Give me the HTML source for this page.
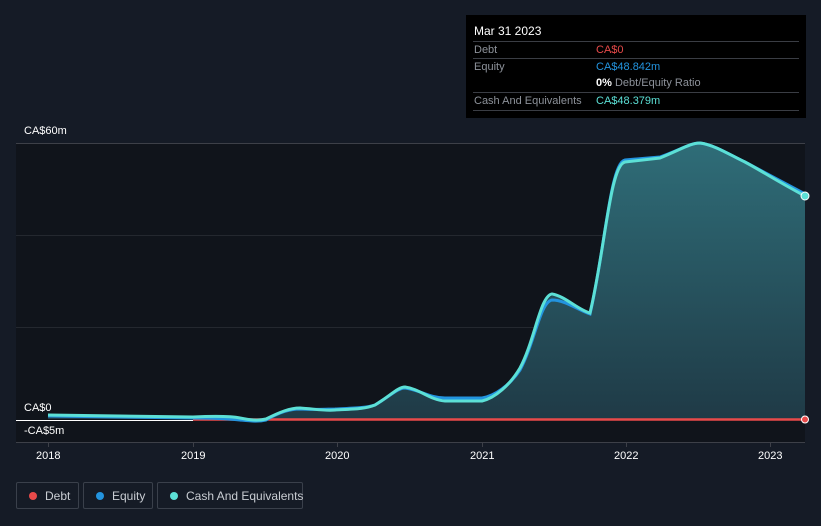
<!DOCTYPE html>
<html><head><meta charset="utf-8"><style>
html,body{margin:0;padding:0;}
body{width:821px;height:526px;background:#151b26;font-family:"Liberation Sans",sans-serif;position:relative;overflow:hidden;color:#fff;}
.tip{position:absolute;left:466px;top:15px;width:340px;height:103px;background:#000;font-size:11px;}
.tip .h{position:absolute;left:8px;top:9px;font-size:12px;color:#fff;}
.row{position:absolute;left:7px;width:326px;border-top:1px solid #3a3d44;height:17px;}
.row span{position:absolute;top:2px;white-space:nowrap;}
.l{left:1px;color:#8d929a;}
.v{left:123px;}
.lab{position:absolute;font-size:11px;color:#fff;}
.leg{position:absolute;top:482px;height:27px;border:1px solid #3a404b;border-radius:2px;font-size:12px;color:#c9cdd3;box-sizing:border-box;white-space:nowrap;}
.leg i{position:absolute;left:12px;top:9px;width:8px;height:8px;border-radius:50%;}
.leg span{position:absolute;left:28px;top:6px;}
</style></head><body>
<svg width="821" height="526" style="position:absolute;left:0;top:0">
<defs><linearGradient id="g" x1="0" y1="0" x2="0" y2="1"><stop offset="0" stop-color="#2f6d78"/><stop offset="1" stop-color="#1f3a46"/></linearGradient></defs>
<rect x="16" y="143" width="789" height="299" fill="#10141b"/>
<line x1="16" y1="143.5" x2="805" y2="143.5" stroke="#3d4048"/>
<line x1="16" y1="235.5" x2="805" y2="235.5" stroke="#24282f"/>
<line x1="16" y1="327.5" x2="805" y2="327.5" stroke="#24282f"/>
<line x1="16" y1="442.5" x2="805" y2="442.5" stroke="#3d4048"/>
<line x1="16" y1="420.5" x2="193" y2="420.5" stroke="#fff"/>
<path d="M48,415 L193,417 C215,416 230,416 240,418 C250,420 258,421 266,419 C280,412 290,408 300,408 C315,409 325,411 335,410 C355,409 365,409 375,405 C390,396 398,387 405,387 C420,389 430,400 445,401 L482,401 C495,398 510,385 520,368 C535,340 540,300 552,296 C565,296 578,310 590,313 C605,250 610,165 625,162 L660,158 C680,150 690,143 700,143 C715,145 730,155 745,162 C760,170 775,180 805,196 L805,419 L48,419 Z" fill="url(#g)"/>
<line x1="193" y1="419.5" x2="805" y2="419.5" stroke="#e84a4a" stroke-width="2.5"/>
<path d="M48,416 L193,418 C215,418 230,419 240,420 C250,421 258,422 266,420 C280,412 290,409 300,409 C315,410 325,409 335,409 C355,408 365,408 375,405 C390,396 398,388 405,388 C420,390 430,398 445,398 L482,398 C495,396 510,385 520,370 C535,342 540,302 552,300 C565,300 578,310 590,314 C605,250 610,163 625,160 L660,157 C680,150 690,143 700,143 C715,145 730,155 745,162 C760,170 775,178 805,194" fill="none" stroke="#2394df" stroke-width="3"/>
<path d="M48,415 L193,417 C215,416 230,416 240,418 C250,420 258,421 266,419 C280,412 290,408 300,408 C315,409 325,411 335,410 C355,409 365,409 375,405 C390,396 398,387 405,387 C420,389 430,400 445,401 L482,401 C495,398 510,385 520,368 C535,340 540,296 552,294 C565,296 578,310 590,313 C605,250 610,165 625,162 L660,158 C680,150 690,143 700,143 C715,145 730,155 745,162 C760,170 775,180 805,196" fill="none" stroke="#5ce0d6" stroke-width="3"/>
<circle cx="805" cy="419.5" r="3.5" fill="#e84a4a" stroke="#fff" stroke-width="1"/>
<circle cx="805" cy="196" r="4" fill="#5ce0d6" stroke="#fff" stroke-width="1"/>
<g stroke="#3d4048"><line x1="48.5" y1="442" x2="48.5" y2="447"/><line x1="193.5" y1="442" x2="193.5" y2="447"/><line x1="337.5" y1="442" x2="337.5" y2="447"/><line x1="482.5" y1="442" x2="482.5" y2="447"/><line x1="626.5" y1="442" x2="626.5" y2="447"/><line x1="770.5" y1="442" x2="770.5" y2="447"/></g>
</svg>
<div class="lab" style="left:24px;top:125px">CA$60m</div>
<div class="lab" style="left:24px;top:402px">CA$0</div>
<div class="lab" style="left:24px;top:425px">-CA$5m</div>
<div class="lab" style="left:36px;top:450px">2018</div>
<div class="lab" style="left:181px;top:450px">2019</div>
<div class="lab" style="left:325px;top:450px">2020</div>
<div class="lab" style="left:470px;top:450px">2021</div>
<div class="lab" style="left:614px;top:450px">2022</div>
<div class="lab" style="left:758px;top:450px">2023</div>
<div class="tip">
<div class="h">Mar 31 2023</div>
<div class="row" style="top:26px"><span class="l">Debt</span><span class="v" style="color:#e84a4a">CA$0</span></div>
<div class="row" style="top:43px"><span class="l">Equity</span><span class="v" style="color:#2394df">CA$48.842m</span></div>
<div class="row" style="top:60px;border-top:none"><span class="v" style="color:#8d929a"><b style="color:#fff">0%</b> Debt/Equity Ratio</span></div>
<div class="row" style="top:77px"><span class="l">Cash And Equivalents</span><span class="v" style="color:#5ce0d6">CA$48.379m</span></div>
<div class="row" style="top:95px;height:0"></div>
</div>
<div class="leg" style="left:16px;width:63px"><i style="background:#e84a4a"></i><span>Debt</span></div>
<div class="leg" style="left:83px;width:70px"><i style="background:#2394df"></i><span>Equity</span></div>
<div class="leg" style="left:157px;width:146px"><i style="background:#5ce0d6"></i><span>Cash And Equivalents</span></div>
</body></html>
